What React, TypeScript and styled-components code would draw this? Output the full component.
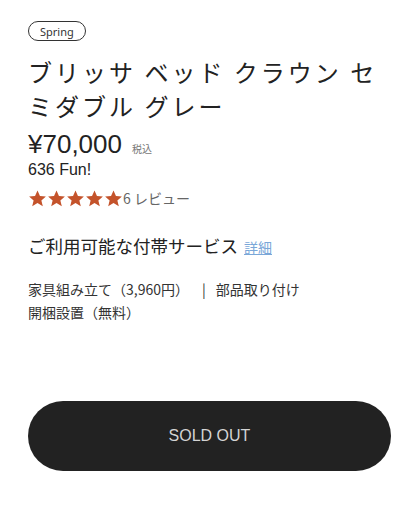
import styled, { createGlobalStyle } from "styled-components";

const GlobalStyle = createGlobalStyle`
  body {
    margin: 0;
    background: #fff;
    font-family: "Noto Sans CJK JP", "Noto Sans", sans-serif;
    color: #222;
  }
`;

const Page = styled.div`
  display: flex;
  flex-direction: column;
  align-items: flex-start;
  width: 418px;
  padding: 21px 28px 0 28px;
  box-sizing: border-box;
`;

const Tag = styled.span`
  display: inline-flex;
  align-items: center;
  height: 20px;
  padding: 0 11px;
  border: 1px solid #333;
  border-radius: 10px;
  font-family: "Noto Sans", sans-serif;
  font-size: 11px;
  color: #333;
  box-sizing: border-box;
`;

const Title = styled.h1`
  margin: 14px 0 0 0;
  font-size: 24px;
  font-weight: 400;
  line-height: 34px;
  letter-spacing: 3px;
  color: #222;
`;

const PriceRow = styled.div`
  display: flex;
  align-items: baseline;
  gap: 10px;
  margin-top: 6px;
`;

const Price = styled.span`
  font-family: "Liberation Sans", sans-serif;
  font-size: 26px;
  line-height: 30px;
  color: #222;
`;

const Tax = styled.span`
  font-size: 10px;
  color: #777;
`;

const Fun = styled.div`
  font-family: "Liberation Sans", sans-serif;
  font-size: 16px;
  line-height: 20px;
  margin-top: 1px;
`;

const Rating = styled.div`
  display: flex;
  align-items: center;
  margin-top: 8px;
  height: 20px;
`;

const Stars = styled.div`
  display: flex;
`;

const Reviews = styled.span`
  font-size: 14px;
  color: #666;
`;

const ServiceHead = styled.div`
  display: flex;
  align-items: baseline;
  gap: 6px;
  margin-top: 26px;
  font-size: 17.5px;
  line-height: 24px;
`;

const DetailLink = styled.a`
  font-size: 14px;
  color: #7aa7d8;
  text-decoration: underline;
`;

const ServiceList = styled.div`
  margin-top: 19px;
  font-size: 14px;
  line-height: 23px;
  color: #333;
`;

const Sep = styled.span`
  margin: 0 10px 0 13px;
  color: #333;
`;

const SoldOut = styled.button`
  display: flex;
  align-items: center;
  justify-content: center;
  width: 363px;
  height: 70px;
  margin-top: 77px;
  border: none;
  border-radius: 35px;
  background: #222;
  color: #d4d4d4;
  font-family: "Liberation Sans", sans-serif;
  font-size: 16px;
`;

function Star() {
  return (
    <svg width="19" height="19" viewBox="0 0 24 24">
      <path
        d="M12 1.8l3.1 7 7.5.6-5.7 5 1.8 7.4L12 17.8l-6.7 4 1.8-7.4-5.7-5 7.5-.6z"
        fill="#c4532b"
      />
    </svg>
  );
}

export default function App() {
  return (
    <>
      <GlobalStyle />
      <Page>
        <Tag>Spring</Tag>
        <Title>ブリッサ ベッド クラウン セミダブル グレー</Title>
        <PriceRow>
          <Price>¥70,000</Price>
          <Tax>税込</Tax>
        </PriceRow>
        <Fun>636 Fun!</Fun>
        <Rating>
          <Stars>
            {[0, 1, 2, 3, 4].map((i) => (
              <Star key={i} />
            ))}
          </Stars>
          <Reviews>6 レビュー</Reviews>
        </Rating>
        <ServiceHead>
          <span>ご利用可能な付帯サービス</span>
          <DetailLink href="#">詳細</DetailLink>
        </ServiceHead>
        <ServiceList>
          <div>
            家具組み立て（3,960円）<Sep>|</Sep>部品取り付け
          </div>
          <div>開梱設置（無料）</div>
        </ServiceList>
        <SoldOut>SOLD OUT</SoldOut>
      </Page>
    </>
  );
}
